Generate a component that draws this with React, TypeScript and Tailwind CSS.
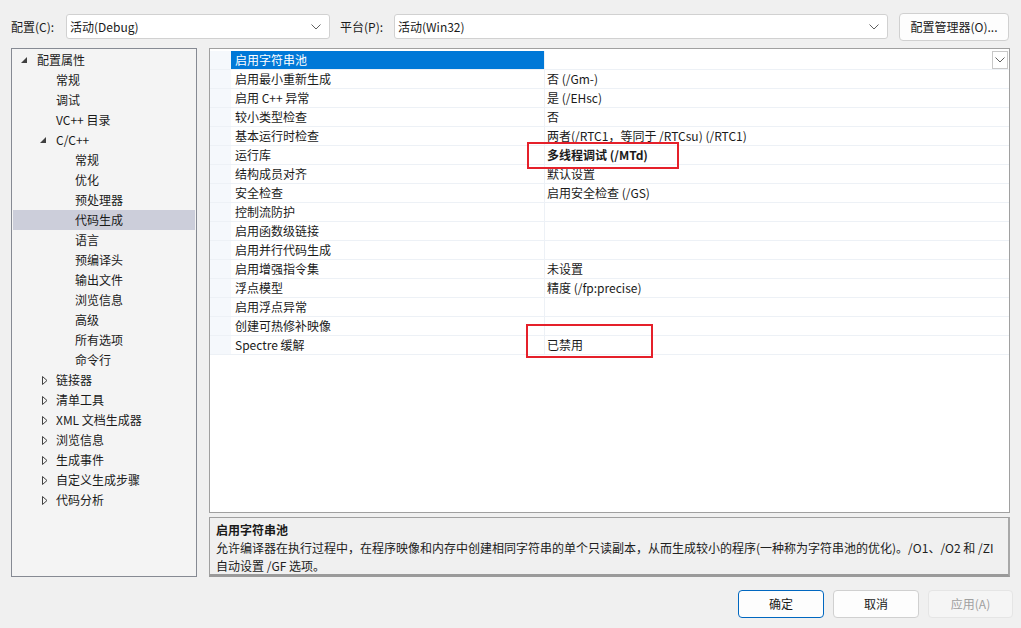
import React from "react";

const FONT = { fontFamily: '"Noto Sans CJK SC", "Noto Sans", sans-serif' };

const treeItems = [
  { text: "配置属性", level: 0, arrow: "open" },
  { text: "常规", level: 1 },
  { text: "调试", level: 1 },
  { text: "VC++ 目录", level: 1 },
  { text: "C/C++", level: 1, arrow: "open" },
  { text: "常规", level: 2 },
  { text: "优化", level: 2 },
  { text: "预处理器", level: 2 },
  { text: "代码生成", level: 2, selected: true },
  { text: "语言", level: 2 },
  { text: "预编译头", level: 2 },
  { text: "输出文件", level: 2 },
  { text: "浏览信息", level: 2 },
  { text: "高级", level: 2 },
  { text: "所有选项", level: 2 },
  { text: "命令行", level: 2 },
  { text: "链接器", level: 1, arrow: "closed" },
  { text: "清单工具", level: 1, arrow: "closed" },
  { text: "XML 文档生成器", level: 1, arrow: "closed" },
  { text: "浏览信息", level: 1, arrow: "closed" },
  { text: "生成事件", level: 1, arrow: "closed" },
  { text: "自定义生成步骤", level: 1, arrow: "closed" },
  { text: "代码分析", level: 1, arrow: "closed" },
];

const props = [
  { name: "启用字符串池", value: "" },
  { name: "启用最小重新生成", value: "否 (/Gm-)" },
  { name: "启用 C++ 异常", value: "是 (/EHsc)" },
  { name: "较小类型检查", value: "否" },
  { name: "基本运行时检查", value: "两者(/RTC1，等同于 /RTCsu) (/RTC1)" },
  { name: "运行库", value: "多线程调试 (/MTd)", bold: true },
  { name: "结构成员对齐", value: "默认设置" },
  { name: "安全检查", value: "启用安全检查 (/GS)" },
  { name: "控制流防护", value: "" },
  { name: "启用函数级链接", value: "" },
  { name: "启用并行代码生成", value: "" },
  { name: "启用增强指令集", value: "未设置" },
  { name: "浮点模型", value: "精度 (/fp:precise)" },
  { name: "启用浮点异常", value: "" },
  { name: "创建可热修补映像", value: "" },
  { name: "Spectre 缓解", value: "已禁用" },
];

const Chevron = ({ className = "" }: any) => (
  <svg width="10" height="6" viewBox="0 0 10 6" className={className}>
    <path d="M0.5 0.5 L5 5 L9.5 0.5" fill="none" stroke="#606060" strokeWidth="1" />
  </svg>
);

const Arrow = ({ type }: any) => {
  if (type === "open") {
    return (
      <svg width="6" height="6" viewBox="0 0 6 6">
        <path d="M6 0 L6 6 L0 6 Z" fill="#404040" />
      </svg>
    );
  }
  return (
    <svg width="6" height="9" viewBox="0 0 6 9">
      <path d="M0.5 0.5 L5 4.5 L0.5 8.5 Z" fill="none" stroke="#404040" strokeWidth="1" />
    </svg>
  );
};

const Select = ({ text, width }: any) => (
  <div
    className="h-[25px] flex items-center justify-between bg-white border border-[#d1d1d1] rounded-[3px] pl-[3px] pr-[8px]"
    style={{ width }}
  >
    <span>{text}</span>
    <Chevron />
  </div>
);

export default function App() {
  return (
    <div
      className="w-[1021px] h-[628px] bg-[#f0f0f0] text-[12px] leading-[16px] text-[#1a1a1a] relative overflow-hidden"
      style={FONT}
    >
      {/* top bar */}
      <div className="flex items-center pt-[13px] pl-[11px] h-[40px]">
        <span className="w-[55px]">配置(C):</span>
        <Select text="活动(Debug)" width={264} />
        <span className="ml-[10px] w-[54px]">平台(P):</span>
        <Select text="活动(Win32)" width={494} />
        <button className="ml-[11px] w-[110px] h-[28px] bg-[#fdfdfd] border border-[#d0d0d0] rounded-[4px]">
          配置管理器(O)...
        </button>
      </div>

      {/* main */}
      <div className="flex gap-[12px] pl-[11px] mt-[8px] h-[529px]">
        {/* tree */}
        <div className="w-[186px] border border-[#868a93] bg-[#f4f4f4] pt-px">
          {treeItems.map((item, i) => (
            <div
              key={i}
              className={`h-[20px] flex items-center relative mx-px ${item.selected ? "bg-[#ccceda]" : ""}`}
              style={{ paddingLeft: 24 + item.level * 19 }}
            >
              {item.arrow && (
                <span
                  className="absolute flex items-center"
                  style={{ left: item.arrow === "open" ? 8 + item.level * 19 : 29 + (item.level - 1) * 19 }}
                >
                  <Arrow type={item.arrow} />
                </span>
              )}
              <span>{item.text}</span>
            </div>
          ))}
        </div>

        {/* right side */}
        <div className="w-[801px] flex flex-col gap-[4px]">
          <div className="h-[467px] bg-white border border-[#a0a0a0] pt-[2px]">
            {props.map((p, i) => (
              <div key={i} className="h-[19px] flex border-b border-[#edf1f6]">
                <div className="w-[21px] bg-[#f5f8fc]" />
                <div
                  className={`w-[313px] pl-[4px] flex items-center ${i === 0 ? "bg-[#0078d7] text-white" : ""}`}
                >
                  {p.name}
                </div>
                <div className="flex-1 border-l border-[#edf1f6] pl-[2px] flex items-center justify-between pr-px">
                  <span className={p.bold ? "font-bold" : ""}>{p.value}</span>
                  {i === 0 && (
                    <div className="w-[16px] h-[18px] border border-[#c8c8c8] bg-white flex items-center justify-center">
                      <Chevron />
                    </div>
                  )}
                </div>
              </div>
            ))}
          </div>
          <div className="h-[60px] bg-[#f0f0f0] border border-[#a0a0a0] border-b-[3px] border-r-[2px] border-b-[#9a9a9a] border-r-[#a8a8a8] pl-[6px] pt-[3px] leading-[18px]">
            <div className="font-bold">启用字符串池</div>
            <div className="text-[#202020]">
              允许编译器在执行过程中，在程序映像和内存中创建相同字符串的单个只读副本，从而生成较小的程序(一种称为字符串池的优化)。/O1、/O2 和 /ZI
              <br />
              自动设置 /GF 选项。
            </div>
          </div>
        </div>
      </div>

      {/* buttons */}
      <div className="flex justify-end gap-[9px] pr-[8px] mt-[13px]">
        <button className="w-[86px] h-[28px] bg-[#fdfdfd] border border-[#0067c0] rounded-[4px]">确定</button>
        <button className="w-[86px] h-[28px] bg-[#fdfdfd] border border-[#d0d0d0] rounded-[4px]">取消</button>
        <button className="w-[85px] h-[28px] bg-[#f5f5f5] border border-[#e5e5e5] rounded-[4px] text-[#a0a0a0]">
          应用(A)
        </button>
      </div>

      {/* red annotation boxes */}
      <div className="absolute left-[527px] top-[142px] w-[152px] h-[27px] border-2 border-[#e5202a]" />
      <div className="absolute left-[526px] top-[324px] w-[127px] h-[34px] border-2 border-[#e5202a]" />
    </div>
  );
}
